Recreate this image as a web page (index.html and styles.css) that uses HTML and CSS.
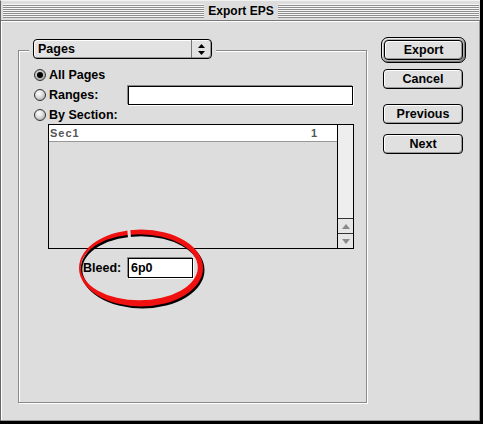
FILE: index.html
```html
<!DOCTYPE html>
<html lang="en">
<head>
    <meta charset="UTF-8">
    <title>Export EPS</title>
    <link rel="stylesheet" href="styles.css">
</head>
<body>
    <div class="window">
        <div class="titlebar">
            <span class="stripes"></span>
            <span class="title">Export EPS</span>
            <span class="stripes"></span>
        </div>

        <div class="content">
            <div class="group">
                <div class="popup">
                    <span class="popup-label">Pages</span>
                    <span class="popup-arrows">
                        <svg width="7" height="11" viewBox="0 0 7 11">
                            <path d="M3.5 0 L7 4 L0 4 Z M0 7 L7 7 L3.5 11 Z" fill="#000"/>
                        </svg>
                    </span>
                </div>

                <div class="option first">
                    <span class="radio checked"></span>
                    <span class="label">All Pages</span>
                </div>
                <div class="option">
                    <span class="radio"></span>
                    <span class="label wide">Ranges:</span>
                    <span class="field ranges"></span>
                </div>
                <div class="option last">
                    <span class="radio"></span>
                    <span class="label">By Section:</span>
                </div>

                <div class="list">
                    <div class="list-rows">
                        <div class="list-row">
                            <span class="sec-name">Sec1</span>
                            <span class="sec-page">1</span>
                        </div>
                    </div>
                    <div class="scrollbar">
                        <div class="track"></div>
                        <div class="arrow">
                            <svg width="8" height="5" viewBox="0 0 8 5"><path d="M4 0 L8 5 L0 5 Z" fill="#8a8a8a"/></svg>
                        </div>
                        <div class="arrow">
                            <svg width="8" height="5" viewBox="0 0 8 5"><path d="M0 0 L8 0 L4 5 Z" fill="#8a8a8a"/></svg>
                        </div>
                    </div>
                </div>

                <div class="bleed">
                    <span class="label bleed-label">Bleed:</span>
                    <span class="field bleed-field">6p0</span>
                </div>
            </div>

            <div class="buttons">
                <div class="default-ring">
                    <div class="btn">Export</div>
                </div>
                <div class="btn cancel">Cancel</div>
                <div class="btn previous">Previous</div>
                <div class="btn">Next</div>
            </div>
        </div>
    </div>

    <!-- red hand-drawn circle around the bleed field -->
    <svg class="markup" width="483" height="424" viewBox="0 0 483 424">
        <defs>
            <mask id="gap">
                <rect width="483" height="424" fill="#fff"/>
                <polygon points="126.5,220 129.5,220 131.5,244 128.5,244" fill="#000"/>
            </mask>
            <path id="ring" fill-rule="evenodd"
                  d="M79 268 a62 38.5 0 1 0 124 0 a62 38.5 0 1 0 -124 0 Z
                     M80.8 267.3 a58.5 33 0 1 0 117 0 a58.5 33 0 1 0 -117 0 Z"/>
        </defs>
        <g mask="url(#gap)">
            <use href="#ring" fill="#000" transform="translate(1.5,2)"/>
            <use href="#ring" fill="#f01010"/>
        </g>
    </svg>
</body>
</html>
```

FILE: styles.css
```css
html, body {
    margin: 0;
}

body {
    position: relative;
    width: 483px;
    height: 424px;
    overflow: hidden;
    background: #000;
    font-family: "Liberation Sans", Arial, sans-serif;
    font-size: 12.5px;
    font-weight: bold;
    color: #000;
}

.window {
    width: 480px;
    height: 421px;
    box-sizing: border-box;
    display: flex;
    flex-direction: column;
    background: #dddddd;
    border-left: 1px solid #666;
    border-top: 1px solid #f2f2f2;
}

/* title bar */
.titlebar {
    height: 19px;
    display: flex;
    align-items: center;
    padding: 0 1px 0 2px;
    background: #dddddd;
}

.stripes {
    flex: 1;
    height: 14px;
    background: repeating-linear-gradient(to bottom, #f6f6f6 0 1px, #8e8e8e 1px 2px);
}

.title {
    padding: 0 4px;
    font-size: 12px;
    line-height: 14px;
}

/* dialog body */
.content {
    flex: 1;
    display: flex;
    align-items: flex-start;
    padding-left: 17px;
    border-top: 1px solid #777;
    border-right: 1px solid #999;
    border-bottom: 1px solid #999;
    box-shadow: inset 1px 1px 0 #fff;
}

.group {
    width: 349px;
    height: 353px;
    box-sizing: border-box;
    margin-top: 29px;
    border: 1px solid #8a8a8a;
    box-shadow: 1px 1px 0 #fff, inset 1px 1px 0 #fff;
}

.popup {
    width: 179px;
    height: 20px;
    box-sizing: border-box;
    margin: -12px 0 0 14px;
    display: flex;
    border: 1px solid #000;
    border-radius: 4px;
    background: #e2e2e2;
    box-shadow: 0 0 0 4px #dddddd, inset 1px 1px 0 #fff, inset -1px -1px 0 #999;
}

.popup-label {
    flex: 1;
    padding-left: 4px;
    line-height: 18px;
}

.popup-arrows {
    width: 19px;
    display: flex;
    align-items: center;
    justify-content: center;
    border-left: 1px solid #777;
}

.option {
    height: 20px;
    display: flex;
    align-items: center;
    padding-left: 15px;
}

.option.first { margin-top: 6px; }
.option.last { height: 19px; }

.radio {
    width: 12px;
    height: 12px;
    box-sizing: border-box;
    margin-right: 3px;
    border: 1px solid #333;
    border-radius: 50%;
    background: radial-gradient(circle at 40% 35%, #fff 0, #e4e4e4 35%, #9c9c9c 100%);
    display: flex;
    align-items: center;
    justify-content: center;
}

.radio.checked {
    background: radial-gradient(circle at 40% 35%, #ddd 0, #999 100%);
}

.radio.checked::after {
    content: "";
    width: 6px;
    height: 6px;
    border-radius: 50%;
    background: #000;
}

.label.wide { width: 79px; }

.field {
    box-sizing: border-box;
    background: #fff;
    border: 1px solid #000;
    box-shadow: -1px -1px 0 #888, 1px 1px 0 #fff;
}

.field.ranges {
    width: 225px;
    height: 19px;
    margin-top: 1px;
}

/* section list */
.list {
    width: 306px;
    height: 125px;
    box-sizing: border-box;
    margin-left: 29px;
    display: flex;
    border: 1px solid #000;
    background: #dddddd;
}

.list-rows { flex: 1; }

.list-row {
    height: 16px;
    display: flex;
    align-items: center;
    background: #fff;
    border-bottom: 1px solid #999;
    font-family: "Liberation Sans", Arial, sans-serif;
    font-size: 11px;
    font-weight: bold;
    color: #555;
    letter-spacing: 1px;
}

.sec-name {
    flex: 1;
    padding-left: 1px;
}

.sec-page {
    width: 26px;
}

.scrollbar {
    width: 15px;
    display: flex;
    flex-direction: column;
    border-left: 1px solid #000;
    background: #eeeeee;
}

.track { flex: 1; }

.arrow {
    height: 14px;
    display: flex;
    align-items: center;
    justify-content: center;
    border-top: 1px solid #333;
    background: #e6e6e6;
}

.bleed {
    height: 20px;
    display: flex;
    align-items: center;
    margin-top: 9px;
    padding-left: 64px;
}

.bleed-label { width: 45px; }

.bleed-field {
    width: 65px;
    height: 20px;
    padding-left: 2px;
    line-height: 18px;
}

/* buttons */
.buttons {
    display: flex;
    flex-direction: column;
    align-items: flex-start;
    margin-left: 14px;
    padding-top: 16px;
}

.default-ring {
    padding: 2px;
    border: 1px solid #000;
    border-radius: 7px;
    background: #b4b4b4;
    box-shadow: inset 1px 1px 0 #eee, inset -1px -1px 0 #777;
    margin-bottom: 6px;
}

.btn {
    width: 80px;
    height: 20px;
    box-sizing: border-box;
    border: 1px solid #000;
    border-radius: 4px;
    background: #e0e0e0;
    box-shadow: inset 1px 1px 0 #fff, inset -1px -1px 0 #999;
    text-align: center;
    line-height: 18px;
}

.default-ring .btn { width: 79px; }

.buttons > .btn { margin-left: 2px; }

.btn.cancel { margin-bottom: 15px; }
.btn.previous { margin-bottom: 10px; }

.markup {
    position: absolute;
    left: 0;
    top: 0;
    pointer-events: none;
}
```
